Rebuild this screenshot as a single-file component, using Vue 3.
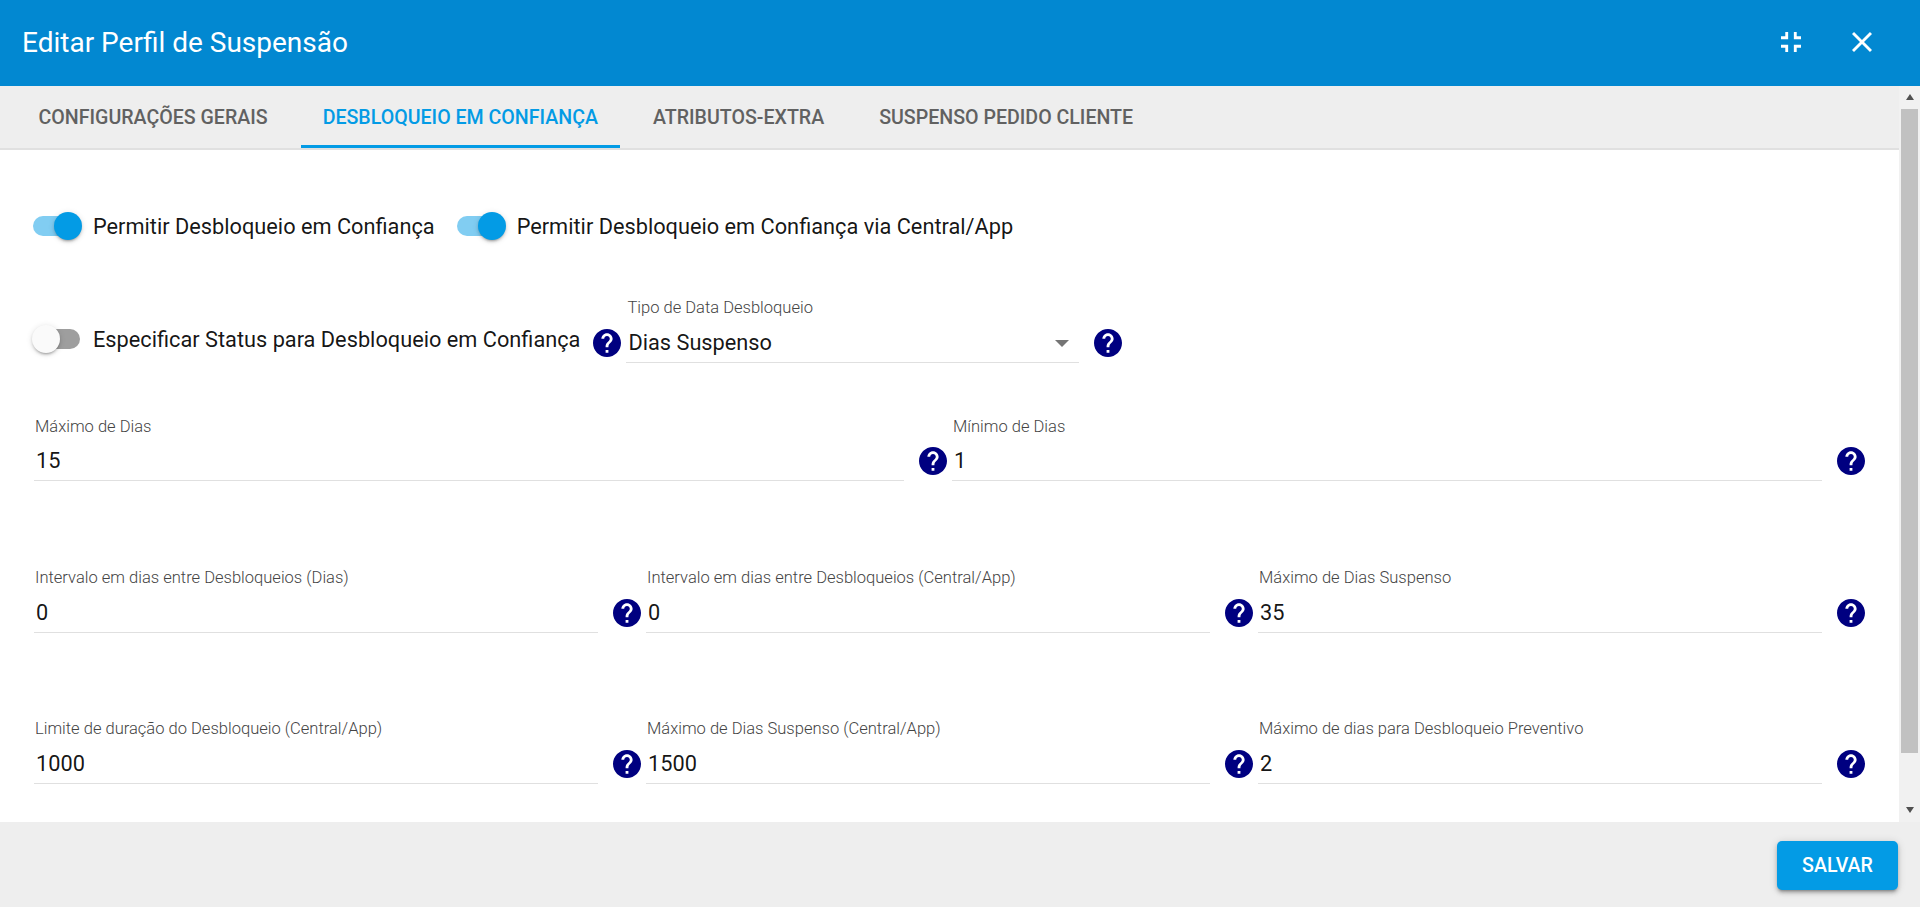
<template>
  <div class="dialog">
    <header class="dialog-header">
      <h1 class="dialog-title">Editar Perfil de Suspensão</h1>
      <div class="header-actions">
        <svg class="header-icon" viewBox="5 5 14 14"><path d="M5 16h3v3h2v-5H5v2zm3-8H5v2h5V5H8v3zm6 11h2v-3h3v-2h-5v5zm2-11V5h-2v5h5V8h-3z" /></svg>
        <svg class="header-icon" viewBox="5 5 14 14"><path d="M19 6.41 17.59 5 12 10.59 6.41 5 5 6.41 10.59 12 5 17.59 6.41 19 12 13.41 17.59 19 19 17.59 13.41 12z" /></svg>
      </div>
    </header>

    <div class="dialog-middle">
      <div class="dialog-scroll">
        <nav class="tabs">
          <div v-for="(tab, i) in tabs" :key="tab" class="tab" :class="{ active: i === 1 }">{{ tab }}</div>
        </nav>

        <div class="tab-content">
          <div class="toggle-row">
            <label class="toggle on"><span class="track"><span class="thumb"></span></span>Permitir Desbloqueio em Confiança</label>
            <label class="toggle on"><span class="track"><span class="thumb"></span></span>Permitir Desbloqueio em Confiança via Central/App</label>
          </div>

          <div class="status-row">
            <label class="toggle"><span class="track"><span class="thumb"></span></span>Especificar Status para Desbloqueio em Confiança</label>
            <svg class="help status-help" viewBox="2 2 20 20"><path :d="helpPath" /></svg>
            <div class="field select-field">
              <div class="field-label">Tipo de Data Desbloqueio</div>
              <div class="field-value">Dias Suspenso<span class="select-arrow"></span></div>
            </div>
            <svg class="help" viewBox="2 2 20 20"><path :d="helpPath" /></svg>
          </div>

          <div v-for="(row, r) in rows" :key="r" class="field-row" :class="'row-' + r" :style="{ gridTemplateColumns: `repeat(${row.length}, 1fr)` }">
            <div v-for="f in row" :key="f.label" class="field-cell">
              <div class="field">
                <div class="field-label">{{ f.label }}</div>
                <div class="field-value">{{ f.value }}</div>
              </div>
              <svg class="help" viewBox="2 2 20 20"><path :d="helpPath" /></svg>
            </div>
          </div>
        </div>
      </div>

      <div class="scrollbar">
        <span class="arrow up"></span>
        <div class="scroll-thumb"></div>
        <span class="arrow down"></span>
      </div>
    </div>

    <footer class="dialog-footer">
      <button class="save-btn">SALVAR</button>
    </footer>
  </div>
</template>

<script setup>
const helpPath = 'M12 2C6.48 2 2 6.48 2 12s4.48 10 10 10 10-4.48 10-10S17.52 2 12 2zm1 17h-2v-2h2v2zm2.07-7.75l-.9.92C13.45 12.9 13 13.5 13 15h-2v-.5c0-1.1.45-2.1 1.17-2.83l1.24-1.26c.37-.36.59-.86.59-1.41 0-1.1-.9-2-2-2s-2 .9-2 2H8c0-2.21 1.79-4 4-4s4 1.79 4 4c0 .88-.36 1.68-.93 2.25z'

const tabs = ['Configurações Gerais', 'Desbloqueio em Confiança', 'Atributos-Extra', 'Suspenso Pedido Cliente']

const rows = [
  [
    { label: 'Máximo de Dias', value: '15' },
    { label: 'Mínimo de Dias', value: '1' },
  ],
  [
    { label: 'Intervalo em dias entre Desbloqueios (Dias)', value: '0' },
    { label: 'Intervalo em dias entre Desbloqueios (Central/App)', value: '0' },
    { label: 'Máximo de Dias Suspenso', value: '35' },
  ],
  [
    { label: 'Limite de duração do Desbloqueio (Central/App)', value: '1000' },
    { label: 'Máximo de Dias Suspenso (Central/App)', value: '1500' },
    { label: 'Máximo de dias para Desbloqueio Preventivo', value: '2' },
  ],
]
</script>

<style scoped>
.dialog {
  display: flex;
  flex-direction: column;
  height: 907px;
  font-family: Roboto, "Liberation Sans", sans-serif;
  background: #fff;
  overflow: hidden;
}

.dialog-header {
  flex: none;
  height: 86px;
  display: flex;
  align-items: center;
  justify-content: space-between;
  padding: 0 48px 2px 22px;
  box-sizing: border-box;
  background: #0288d1;
  color: #fff;
}

.dialog-title {
  margin: 0;
  font-size: 28px;
  font-weight: 400;
}

.header-actions {
  display: flex;
  align-items: center;
  gap: 51px;
}

.header-icon {
  width: 20px;
  height: 20px;
  fill: #fff;
}

.dialog-middle {
  flex: 1;
  min-height: 0;
  display: flex;
}

.dialog-scroll {
  flex: 1;
  min-width: 0;
  overflow: hidden;
}

.tabs {
  height: 64px;
  box-sizing: border-box;
  display: flex;
  gap: 11px;
  padding-left: 17px;
  background: #eee;
  border-bottom: 2px solid #e0e0e0;
}

.tab {
  height: 62px;
  box-sizing: border-box;
  padding: 0 22.5px 0 21.5px;
  display: flex;
  align-items: center;
  font-size: 19.6px;
  font-weight: 500;
  text-transform: uppercase;
  color: #616161;
}

.tab.active {
  color: #039be5;
  border-bottom: 3px solid #039be5;
  padding-top: 3px;
}

.tab-content {
  padding: 62px 29px 0 34px;
}

.toggle-row {
  display: flex;
  gap: 23px;
  height: 28px;
}

.toggle {
  display: flex;
  align-items: center;
  height: 28px;
  margin-left: -1px;
  font-size: 21.75px;
  color: rgba(0, 0, 0, 0.92);
  white-space: nowrap;
}

.track {
  position: relative;
  flex: none;
  width: 47px;
  height: 20px;
  margin-right: 13px;
  border-radius: 10px;
  background: #81cdf2;
}

.thumb {
  position: absolute;
  top: -4px;
  left: 21px;
  width: 28px;
  height: 28px;
  border-radius: 50%;
  background: #039be5;
  box-shadow: 0 3px 2px -2px rgba(0, 0, 0, 0.2), 0 2px 3px rgba(0, 0, 0, 0.14), 0 1px 6px rgba(0, 0, 0, 0.12);
}

.toggle:not(.on) .track {
  background: #9e9e9e;
}

.toggle:not(.on) .thumb {
  left: -1px;
  background: #fafafa;
}

.status-row {
  display: flex;
  align-items: flex-end;
  margin-top: 57px;
}

.status-row .toggle {
  margin-bottom: 10px;
}

.field-row {
  display: grid;
}

.row-0 {
  margin-top: 52px;
}

.row-0 .field-label {
  margin-top: 1px;
}

.row-0 .field-value {
  margin-top: 8px;
}

.row-1 {
  margin-top: 86px;
}

.row-2 {
  margin-top: 85px;
}

.field-cell {
  display: flex;
  align-items: flex-end;
  min-width: 0;
}

.field {
  flex: 1;
  min-width: 0;
}

.select-field {
  flex: none;
  width: 453px;
}

.select-arrow {
  position: absolute;
  right: 10px;
  top: 13px;
  border-left: 7px solid transparent;
  border-right: 7px solid transparent;
  border-top: 7px solid #757575;
}

.help {
  flex: none;
  width: 28px;
  height: 28px;
  margin: 0 5px 6px 15px;
}

.help path {
  fill: #000080;
}

.status-help.help {
  margin: 0 5px 6px 13px;
}

.field-label {
  height: 21px;
  line-height: 21px;
  padding-left: 1px;
  font-size: 16.55px;
  font-weight: 300;
  color: #444;
}

.field-value {
  position: relative;
  height: 31px;
  line-height: 31px;
  margin-top: 9px;
  padding-left: 2px;
  padding-bottom: 4px;
  font-size: 21.75px;
  color: rgba(0, 0, 0, 0.92);
  border-bottom: 1px solid #e0e0e0;
}

.scrollbar {
  flex: none;
  width: 21px;
  background: #f1f1f1;
  display: flex;
  flex-direction: column;
  align-items: center;
}

.scroll-thumb {
  width: 17px;
  height: 644px;
  margin-top: 9px;
  background: #c1c1c1;
}

.arrow {
  width: 0;
  height: 0;
  border-left: 4.5px solid transparent;
  border-right: 4.5px solid transparent;
}

.arrow.up {
  margin-top: 8px;
  border-bottom: 6px solid #505050;
}

.arrow.down {
  margin-top: 54px;
  border-top: 6px solid #505050;
}

.dialog-footer {
  flex: none;
  height: 85px;
  display: flex;
  justify-content: flex-end;
  padding: 19px 22px 0 0;
  box-sizing: border-box;
  background: #eee;
}

.save-btn {
  width: 121px;
  height: 49px;
  border: 0;
  border-radius: 5px;
  background: #039be5;
  color: #fff;
  font-family: inherit;
  font-size: 19.6px;
  font-weight: 500;
  box-shadow: 0 3px 3px -2px rgba(0, 0, 0, 0.3), 0 3px 4px rgba(0, 0, 0, 0.18), 0 1px 8px rgba(0, 0, 0, 0.14);
}
</style>
